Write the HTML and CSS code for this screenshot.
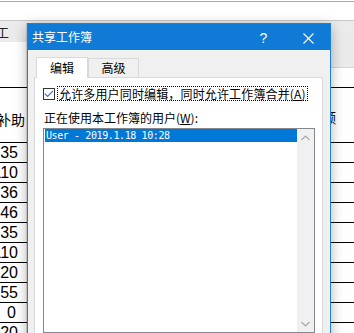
FILE: index.html
```html
<!DOCTYPE html>
<html lang="zh-CN">
<head>
<meta charset="utf-8">
<title>共享工作簿</title>
<link rel="stylesheet" href="styles.css">
</head>
<body>
<div class="sheet">
  <div class="topbar"></div>
  <div class="row hdr"><div class="ca"><span class="cut">工</span></div><div class="cb"></div></div>
  <div class="row r2"><div class="ca"></div><div class="cb shade"></div></div>
  <div class="row r3"><div class="ca"></div><div class="cb"></div></div>
  <div class="row r4"><div class="ca head">补助</div><div class="cb head-r">金额</div></div>
  <div class="row dr"><div class="ca num">135</div><div class="cb"></div></div>
  <div class="row dr"><div class="ca num">110</div><div class="cb"></div></div>
  <div class="row dr"><div class="ca num">136</div><div class="cb"></div></div>
  <div class="row dr"><div class="ca num">146</div><div class="cb"></div></div>
  <div class="row dr"><div class="ca num">135</div><div class="cb"></div></div>
  <div class="row dr"><div class="ca num">110</div><div class="cb"></div></div>
  <div class="row dr"><div class="ca num">120</div><div class="cb"></div></div>
  <div class="row dr"><div class="ca num">155</div><div class="cb"></div></div>
  <div class="row dr"><div class="ca num zero">0</div><div class="cb"></div></div>
  <div class="row dr"><div class="ca num">120</div><div class="cb"></div></div>
</div>

<div class="dialog">
  <div class="titlebar">
    <span class="title">共享工作簿</span>
    <span class="tbtn help">?</span>
    <span class="tbtn close"><svg width="11" height="11" viewBox="0 0 11 11"><path d="M0.5 0.5L10.5 10.5M10.5 0.5L0.5 10.5" stroke="#fff" stroke-width="1.1" fill="none"/></svg></span>
  </div>
  <div class="dbody">
    <div class="tabs">
      <div class="tab sel">编辑</div>
      <div class="tab">高级</div>
    </div>
    <div class="panel">
      <div class="chkrow">
        <span class="chk"><svg width="12" height="12" viewBox="0 0 12 12"><rect x="0.5" y="0.5" width="11" height="11" fill="#fff" stroke="#333"/><path d="M1.8 5.6L4.6 8.4L10 2.8" fill="none" stroke="#3a70c0" stroke-width="1.2"/></svg></span>
        <span class="focus">允许多用户同时编辑，同时允许工作簿合并(<u>A</u>)</span>
      </div>
      <div class="lbl">正在使用本工作簿的用户(<u>W</u>):</div>
      <div class="listbox">
        <div class="items">
          <div class="item">User - 2019.1.18 10:28</div>
        </div>
        <div class="sb">
          <div class="sbbtn"><svg width="9" height="6" viewBox="0 0 9 6"><path d="M0.5 5L4.5 1L8.5 5" fill="none" stroke="#a6a6a6" stroke-width="1.1"/></svg></div>
          <div class="sbtrack"></div>
          <div class="sbbtn"><svg width="9" height="6" viewBox="0 0 9 6"><path d="M0.5 1L4.5 5L8.5 1" fill="none" stroke="#a6a6a6" stroke-width="1.1"/></svg></div>
        </div>
      </div>
    </div>
  </div>
</div>
</body>
</html>
```

FILE: styles.css
```css
html, body {
  margin: 0;
  padding: 0;
}
body {
  width: 354px;
  height: 333px;
  overflow: hidden;
  position: relative;
  background: #fff;
  font-family: "Noto Sans CJK SC", "Noto Sans", sans-serif;
  font-size: 12px;
  color: #000;
}

/* background spreadsheet */
.sheet {
  display: flex;
  flex-direction: column;
}
.topbar {
  flex: none;
  height: 18px;
  margin-top: 1px;
  border-top: 1px solid #ababab;
  border-bottom: 1px solid #c9c9c9;
  background: #fff;
}
.row {
  flex: none;
  display: flex;
}
.ca {
  width: 27px;
  flex: none;
  overflow: hidden;
  display: flex;
  justify-content: flex-end;
  align-items: center;
  white-space: nowrap;
}
.cb {
  flex: 1;
  overflow: hidden;
  white-space: nowrap;
}
.hdr {
  height: 21px;
  background: #ebebeb;
}
.hdr .ca {
  justify-content: flex-start;
}
.cut {
  font-size: 13px;
  margin-left: -4px;
  color: #222;
  line-height: 21px;
}
.r2 {
  height: 26px;
}
.r2 .shade {
  background: #ebebeb;
  border-bottom: 1px solid #d6d6d6;
}
.r3 {
  height: 19px;
  border-bottom: 1px solid #000;
}
.r4 {
  height: 54px;
  border-bottom: 1px solid #000;
}
.head {
  font-size: 14px;
  padding-right: 2px;
  padding-top: 8px;
  box-sizing: border-box;
}
.head-r {
  font-size: 14px;
  text-align: right;
  padding-right: 18px;
  padding-top: 19px;
}
.dr {
  height: 19px;
  border-bottom: 1px solid #000;
}
.num {
  font-family: "Liberation Sans", Arial, sans-serif;
  font-size: 16px;
  padding-right: 9px;
  box-sizing: border-box;
  line-height: 19px;
}
.num.zero {
  padding-right: 11px;
}

/* dialog window */
.dialog {
  position: absolute;
  left: 27px;
  top: 23px;
  width: 302px;
  height: 330px;
  border: 1px solid #1a80d8;
  background: #f0f0f0;
  box-shadow: -1px 0 0 rgba(0, 0, 0, 0.12), 0 3px 12px rgba(0, 0, 0, 0.3);
  display: flex;
  flex-direction: column;
}
.titlebar {
  flex: none;
  height: 26px;
  background: #0f7bd6;
  color: #fff;
  display: flex;
  align-items: center;
}
.title {
  flex: 1;
  padding-left: 4px;
  font-size: 12px;
  line-height: 26px;
}
.tbtn {
  height: 26px;
  display: flex;
  align-items: center;
  justify-content: center;
}
.help {
  width: 45px;
  font-family: "Liberation Sans", Arial, sans-serif;
  font-size: 14px;
  padding-top: 2px;
  box-sizing: border-box;
}
.close {
  width: 44px;
  padding-top: 2px;
  box-sizing: border-box;
}

.dbody {
  flex: 1;
  padding: 7px 7px 0 6px;
  display: flex;
  flex-direction: column;
}
.tabs {
  flex: none;
  height: 20px;
  display: flex;
  align-items: flex-start;
  padding-left: 2px;
}
.tab {
  box-sizing: border-box;
  width: 51px;
  height: 19px;
  margin-top: 1px;
  border: 1px solid #d9d9d9;
  border-bottom: none;
  background: #f0f0f0;
  text-align: center;
  line-height: 18px;
  font-size: 12px;
}
.tab.sel {
  width: 52px;
  height: 21px;
  margin-top: 0;
  background: #fff;
  position: relative;
  z-index: 1;
  line-height: 19px;
}
.panel {
  flex: 1;
  background: #fff;
  border: 1px solid #d9d9d9;
  padding: 8px 7px 0 8px;
  display: flex;
  flex-direction: column;
}
.chkrow {
  display: flex;
  align-items: center;
  height: 15px;
}
.chk {
  width: 12px;
  height: 12px;
  display: flex;
  margin-right: 2px;
}
.focus {
  border: 1px dotted #000;
  padding: 0 1px;
  line-height: 13px;
  font-size: 12px;
  white-space: nowrap;
  letter-spacing: 0.15px;
}
.lbl {
  margin-top: 10px;
  margin-left: 1px;
  line-height: 14px;
  font-size: 12px;
  white-space: nowrap;
}
.listbox {
  margin-top: 3px;
  width: 270px;
  height: 203px;
  border: 1px solid #828790;
  display: flex;
  background: #fff;
}
.items {
  flex: 1;
  padding-left: 1px;
}
.item {
  height: 13px;
  background: #0078d7;
  color: #fff;
  font-family: "DejaVu Sans Mono", "Liberation Mono", monospace;
  font-size: 10px;
  letter-spacing: -0.4px;
  line-height: 13px;
  padding-left: 1px;
  white-space: nowrap;
}
.sb {
  width: 17px;
  flex: none;
  background: #f0f0f0;
  display: flex;
  flex-direction: column;
}
.sbbtn {
  height: 17px;
  display: flex;
  align-items: center;
  justify-content: center;
}
.sbtrack {
  flex: 1;
}
```
